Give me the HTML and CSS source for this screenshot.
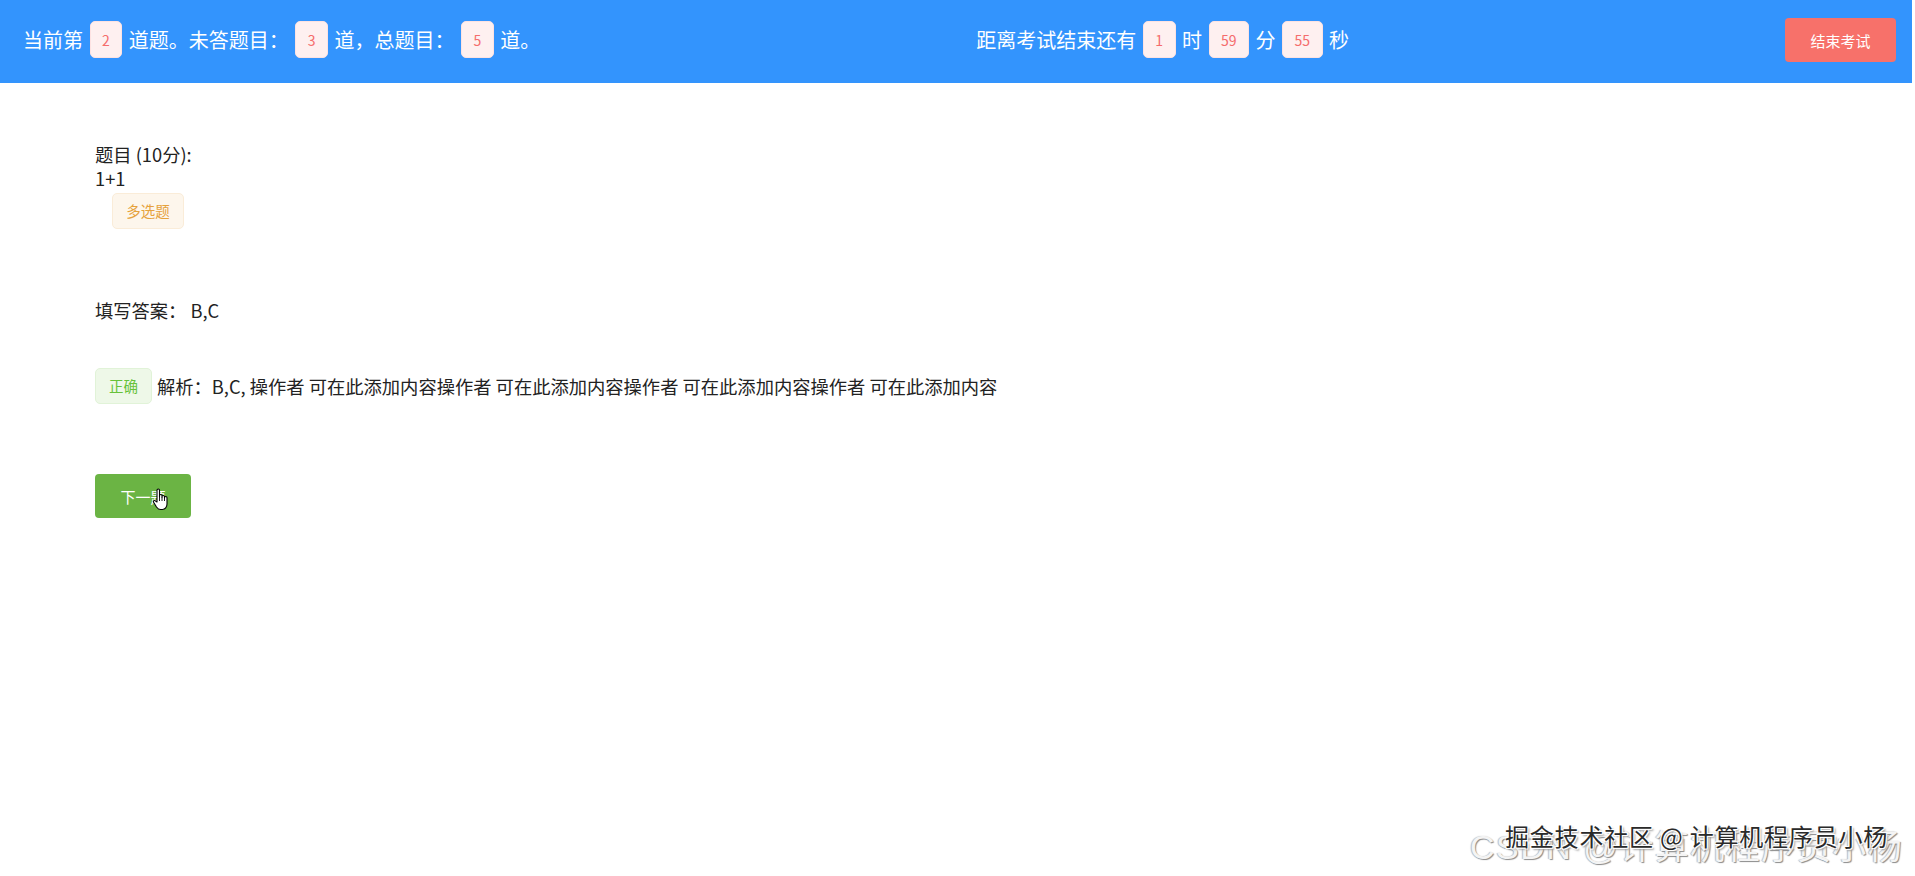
FILE: index.html
```html
<!DOCTYPE html>
<html lang="zh-CN">
<head>
<meta charset="utf-8">
<title>考试</title>
<link rel="stylesheet" href="styles.css">
</head>
<body>
<header class="topbar">
  <div class="progress">
    <span>当前第</span><span class="num">2</span><span>道题。未答题目：</span><span class="num">3</span><span>道，总题目：</span><span class="num">5</span><span>道。</span>
  </div>
  <div class="timer">
    <span>距离考试结束还有</span><span class="num">1</span><span>时</span><span class="num">59</span><span>分</span><span class="num">55</span><span>秒</span>
  </div>
  <button class="end-btn">结束考试</button>
</header>

<main class="content">
  <div class="q-title">题目 (10分):</div>
  <div class="q-body">1+1</div>
  <div class="tag tag-warning type-tag">多选题</div>

  <div class="answer">填写答案：&nbsp;B,C</div>

  <div class="analysis">
    <span class="tag tag-success">正确</span>
    <span class="analysis-text">解析：B,C, 操作者 可在此添加内容操作者 可在此添加内容操作者 可在此添加内容操作者 可在此添加内容</span>
  </div>

  <div class="next-wrap">
    <button class="next-btn">下一题</button>
    <svg class="cursor" width="20" height="24" viewBox="0 0 20 24" aria-hidden="true">
      <path d="M6 15V3.2a1.25 1.25 0 0 1 2.5 0V10V8.7a1.25 1.25 0 0 1 2.5 0V10.5V9.7a1.25 1.25 0 0 1 2.5 0V11.2V10.7a1.25 1.25 0 0 1 2.5 0V17c0 3-2 5.5-4.5 5.5H9.5c-2 0-3-1-4-2.5L2.6 15.3c-.7-1 .5-2.3 1.6-1.5L6 15z" fill="#fff" stroke="#000" stroke-width="1.1" stroke-linejoin="round"/>
      <path d="M8.5 10v4M11 10.5v3.5M13.5 11.2v2.8" stroke="#000" stroke-width="0.9" fill="none"/>
    </svg>
  </div>
</main>

<div class="wm wm-csdn">CSDN @计算机程序员小杨</div>
<div class="wm wm-juejin">掘金技术社区 @ 计算机程序员小杨</div>
</body>
</html>
```

FILE: styles.css
```css
html, body {
  margin: 0;
  padding: 0;
  height: 100%;
  overflow: hidden;
  background: #fff;
}
body {
  position: relative;
  font-family: "Noto Sans CJK SC", "Noto Sans", "Liberation Sans", sans-serif;
  color: #222;
}

.topbar {
  height: 83px;
  width: 1912px;
  box-sizing: border-box;
  background: #3394fd;
  display: flex;
  align-items: center;
  justify-content: space-between;
  padding: 0 16px 4px 23px;
  color: #fff;
  font-size: 20px;
}
.progress, .timer {
  display: flex;
  align-items: center;
  line-height: 28px;
}
.num {
  display: inline-flex;
  align-items: center;
  justify-content: center;
  box-sizing: border-box;
  height: 37px;
  padding: 0 11.5px;
  margin: 0 6.5px;
  background: #fef0f0;
  border: 1px solid #fde2e2;
  border-radius: 5px;
  color: #f56c6c;
  font-size: 14px;
}
.end-btn {
  width: 111px;
  height: 44px;
  border: none;
  border-radius: 4px;
  background: #f7716a;
  color: #fff;
  font-family: inherit;
  font-size: 15px;
  padding: 0;
  margin-top: 1px;
}

.content {
  padding: 59px 0 0 95px;
  font-size: 18.3px;
  line-height: 24px;
}
.tag {
  display: inline-flex;
  align-items: center;
  justify-content: center;
  box-sizing: border-box;
  height: 36px;
  padding: 0 12px;
  border-radius: 5px;
  font-size: 14.5px;
  line-height: 1;
}
.tag-warning {
  background: #fdf6ec;
  border: 1px solid #faecd8;
  color: #e6a23c;
}
.tag-success {
  background: #eef8e8;
  border: 1px solid #e1f3d8;
  color: #67c23a;
}
.type-tag {
  display: flex;
  width: 72px;
  margin: 3px 0 0 17px;
}
.answer {
  margin-top: 69px;
}
.analysis {
  display: flex;
  align-items: center;
  margin-top: 46px;
}
.analysis .tag {
  width: 57px;
}
.analysis-text {
  margin-left: 5px;
}
.next-wrap {
  position: relative;
  margin-top: 70px;
  width: 96px;
}
.next-btn {
  display: block;
  width: 96px;
  height: 44px;
  border: none;
  border-radius: 4px;
  background: #6bb444;
  color: #fff;
  font-family: inherit;
  font-size: 15px;
  padding: 0;
}
.cursor {
  position: absolute;
  left: 56px;
  top: 13px;
}

.wm {
  position: absolute;
  white-space: nowrap;
}
.wm-csdn {
  left: 1470px;
  top: 826px;
  font-size: 34px;
  line-height: 42px;
  letter-spacing: 1.5px;
  color: #f4f4f4;
  text-shadow: 1px 1px 1px #8a8a8a, -1px 0 1px #bbb;
  font-family: "Liberation Sans", "Noto Sans CJK SC", sans-serif;
}
.wm-juejin {
  left: 1505px;
  top: 822px;
  font-size: 24px;
  line-height: 28px;
  letter-spacing: 0.8px;
  color: #2a2a2a;
  text-shadow: 1px 1px 0 #fff, -1px -1px 0 #fff, 1px -1px 0 #fff, -1px 1px 0 #fff, 2px 2px 2px #999;
}
```
